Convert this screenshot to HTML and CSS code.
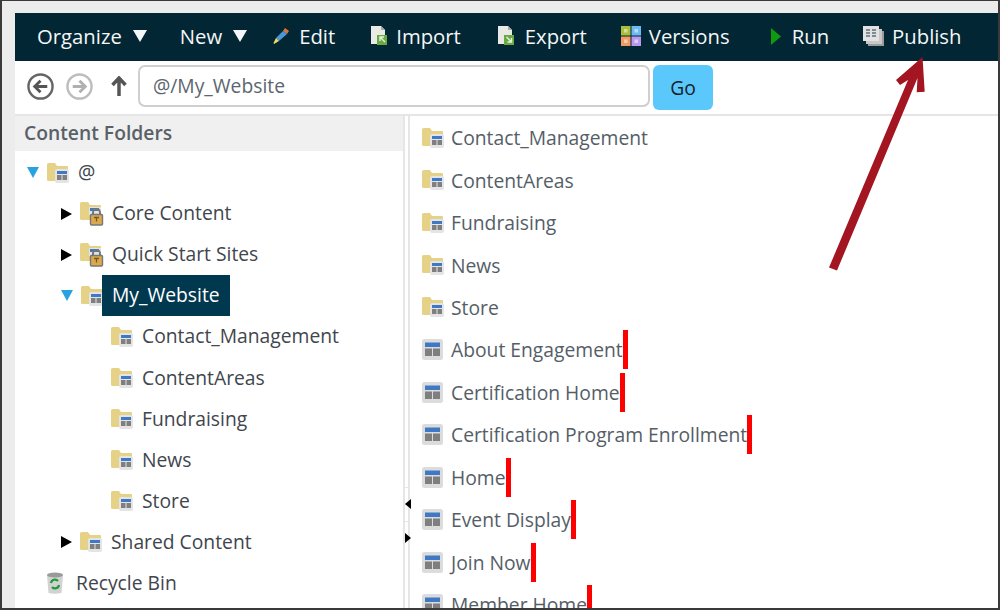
FILE: index.html
```html
<!DOCTYPE html>
<html lang="en">
  <head>
    <meta charset="UTF-8" />
    <title>Content Folders</title>
    <link rel="stylesheet" href="styles.css">
  </head>
  <body>
    <!-- shared icons -->
    <svg class="defs" width="0" height="0">
      <symbol id="page" viewBox="0 0 21 21">
        <rect x="0" y="0" width="21" height="21" rx="2.5" fill="#dcdcdc" />
        <rect x="3" y="3.5" width="15" height="4.5" fill="#3f78c4" />
        <rect x="3" y="9.5" width="7" height="7.5" fill="#7f7f7f" />
        <rect x="11" y="9.5" width="7" height="7.5" fill="#7f7f7f" />
      </symbol>
      <symbol id="folder" viewBox="0 0 22 20">
        <path d="M0 1.5Q0 0 1.5 0H8L10 3H20Q21 3 21 4V18H1.5Q0 18 0 16.5Z" fill="#e6d287" />
        <rect x="8" y="6" width="14" height="14" rx="2" fill="#e4e4e4" />
        <rect x="10" y="8" width="10" height="3" fill="#3f78c4" />
        <rect x="10" y="12" width="4.5" height="5" fill="#7f7f7f" />
        <rect x="15.5" y="12" width="4.5" height="5" fill="#7f7f7f" />
      </symbol>
      <symbol id="locked" viewBox="0 0 24 24">
        <path d="M0 1.5Q0 0 1.5 0H8L10 3H20Q21 3 21 4V18H1.5Q0 18 0 16.5Z" fill="#e6d287" />
        <rect x="9" y="5" width="12" height="8" fill="#e4e4e4" />
        <rect x="10" y="6" width="9" height="3" fill="#3f78c4" />
        <path d="M13 13V10.5a3.5 3.5 0 0 1 7 0V13" fill="none" stroke="#777" stroke-width="2" />
        <rect x="10.5" y="12.5" width="12" height="10.5" rx="1" fill="#dca94a" stroke="#777" stroke-width="1.4" />
        <path d="M14 15.5h5M16.5 15.5v4" stroke="#6e5a2a" stroke-width="1.3" />
      </symbol>
      <symbol id="doc" viewBox="0 0 18 20">
        <path d="M1 0H11L15 4V18H1Z" fill="#e9e9e6" />
        <path d="M11 0L15 4H11Z" fill="#a9a9a9" />
        <rect x="7" y="9" width="10" height="10" fill="#69a944" />
      </symbol>
    </svg>

    <div class="frame">
      <nav class="toolbar">
        <span class="tool organize"><span>Organize</span><i class="caret"></i></span>
        <span class="tool new"><span>New</span><i class="caret"></i></span>
        <span class="tool edit">
          <svg width="18" height="18" viewBox="0 0 18 18">
            <path d="M13 1L17 4L15 7L11 4Z" fill="#d9763a" />
            <path d="M11 4L15 7L7 14L4 11Z" fill="#4b97d8" />
            <path d="M4 11L7 14L2 17L1.5 16Z" fill="#f2dc5c" />
          </svg>
          <span>Edit</span>
        </span>
        <span class="tool import">
          <svg width="18" height="20" viewBox="0 0 18 20">
            <use href="#doc" />
            <path d="M15 16L10 11M10 15V11H14" fill="none" stroke="#e6f2dc" stroke-width="1.4" />
          </svg>
          <span>Import</span>
        </span>
        <span class="tool export">
          <svg width="18" height="20" viewBox="0 0 18 20">
            <use href="#doc" />
            <path d="M9.5 11L14.5 16M14.5 12V16H10.5" fill="none" stroke="#e6f2dc" stroke-width="1.4" />
          </svg>
          <span>Export</span>
        </span>
        <span class="tool versions">
          <svg width="20" height="20" viewBox="0 0 20 20">
            <rect width="9.5" height="9.5" fill="#a8bf3e" />
            <rect x="10.5" width="9.5" height="9.5" fill="#6fb9f2" />
            <rect y="10.5" width="9.5" height="9.5" fill="#f29a62" />
            <rect x="10.5" y="10.5" width="9.5" height="9.5" fill="#b79af0" />
            <rect x="3" y="3" width="3.5" height="3.5" fill="#d4e08e" />
            <rect x="13.5" y="3" width="3.5" height="3.5" fill="#b4dcf8" />
            <rect x="3" y="13.5" width="3.5" height="3.5" fill="#f8cbaa" />
            <rect x="13.5" y="13.5" width="3.5" height="3.5" fill="#dacbf8" />
          </svg>
          <span>Versions</span>
        </span>
        <span class="tool run">
          <svg width="10" height="17" viewBox="0 0 10 17"><path d="M0 0L10 8.5L0 17Z" fill="#0f9a0f" /></svg>
          <span>Run</span>
        </span>
        <span class="tool publish">
          <svg width="21" height="20" viewBox="0 0 21 20">
            <rect x="5" y="5" width="16" height="15" fill="#9c9c9c" />
            <rect x="3" y="3" width="16" height="15" fill="#c8c8c8" />
            <rect x="0" y="0" width="16" height="15" fill="#e2e2e2" />
            <path d="M3 4h4M3 7h4M3 10h4M9 4h4M9 7h4M9 10h4" stroke="#60707c" stroke-width="1.5" />
          </svg>
          <span>Publish</span>
        </span>
      </nav>

      <div class="address">
        <svg class="nav-icon" width="27" height="27" viewBox="0 0 28 28">
          <circle cx="14" cy="14" r="12.5" fill="none" stroke="#666" stroke-width="2.5" />
          <path d="M21 14H9M14 8L8 14L14 20" fill="none" stroke="#555" stroke-width="3" />
        </svg>
        <svg class="nav-icon forward" width="27" height="27" viewBox="0 0 28 28">
          <circle cx="14" cy="14" r="12.5" fill="none" stroke="#bdbdbd" stroke-width="2.5" />
          <path d="M7 14H19M14 8L20 14L14 20" fill="none" stroke="#b0b0b0" stroke-width="3" />
        </svg>
        <svg class="nav-icon up" width="16" height="20" viewBox="0 0 16 20">
          <path d="M8 20V3M1.5 9L8 2L14.5 9" fill="none" stroke="#555" stroke-width="3.5" />
        </svg>
        <div class="path">@/My_Website</div>
        <button class="go">Go</button>
      </div>

      <div class="panes">
        <aside class="left">
          <h2 class="left-title">Content Folders</h2>
          <ul class="tree">
            <li class="node d0"><i class="tw open"></i><svg width="22" height="20"><use href="#folder" /></svg><span class="name">@</span></li>
            <li class="node d1"><i class="tw"></i><svg class="lock" width="24" height="24"><use href="#locked" /></svg><span class="name">Core Content</span></li>
            <li class="node d1"><i class="tw"></i><svg class="lock" width="24" height="24"><use href="#locked" /></svg><span class="name">Quick Start Sites</span></li>
            <li class="node d1"><i class="tw open"></i><svg width="22" height="20"><use href="#folder" /></svg><span class="name selected">My_Website</span></li>
            <li class="node d2"><svg width="22" height="20"><use href="#folder" /></svg><span class="name">Contact_Management</span></li>
            <li class="node d2"><svg width="22" height="20"><use href="#folder" /></svg><span class="name">ContentAreas</span></li>
            <li class="node d2"><svg width="22" height="20"><use href="#folder" /></svg><span class="name">Fundraising</span></li>
            <li class="node d2"><svg width="22" height="20"><use href="#folder" /></svg><span class="name">News</span></li>
            <li class="node d2"><svg width="22" height="20"><use href="#folder" /></svg><span class="name">Store</span></li>
            <li class="node d1"><i class="tw"></i><svg width="22" height="20"><use href="#folder" /></svg><span class="name">Shared Content</span></li>
            <li class="node bin">
              <svg width="18" height="22" viewBox="0 0 18 22">
                <path d="M1 3H17L15.5 21Q9 22.5 2.5 21Z" fill="#d2d2d2" />
                <ellipse cx="9" cy="3" rx="8" ry="2.5" fill="#9a9a9a" />
                <path d="M5 11a4 4 0 0 1 7-2M13 13a4 4 0 0 1-7 2" fill="none" stroke="#1d9a3a" stroke-width="2.2" />
              </svg>
              <span class="name">Recycle Bin</span>
            </li>
          </ul>
        </aside>

        <div class="splitter">
          <div class="split-btn"><i class="arrow-l"></i></div>
          <div class="split-btn"><i class="arrow-r"></i></div>
        </div>

        <ul class="list">
          <li class="item"><svg class="fld" width="22" height="20"><use href="#folder" /></svg><span>Contact_Management</span></li>
          <li class="item"><svg class="fld" width="22" height="20"><use href="#folder" /></svg><span>ContentAreas</span></li>
          <li class="item"><svg class="fld" width="22" height="20"><use href="#folder" /></svg><span>Fundraising</span></li>
          <li class="item"><svg class="fld" width="22" height="20"><use href="#folder" /></svg><span>News</span></li>
          <li class="item"><svg class="fld" width="22" height="20"><use href="#folder" /></svg><span>Store</span></li>
          <li class="item"><svg width="21" height="21"><use href="#page" /></svg><span>About Engagement</span><b class="mark"></b></li>
          <li class="item"><svg width="21" height="21"><use href="#page" /></svg><span>Certification Home</span><b class="mark"></b></li>
          <li class="item"><svg width="21" height="21"><use href="#page" /></svg><span>Certification Program Enrollment</span><b class="mark"></b></li>
          <li class="item"><svg width="21" height="21"><use href="#page" /></svg><span>Home</span><b class="mark"></b></li>
          <li class="item"><svg width="21" height="21"><use href="#page" /></svg><span>Event Display</span><b class="mark"></b></li>
          <li class="item"><svg width="21" height="21"><use href="#page" /></svg><span>Join Now</span><b class="mark"></b></li>
          <li class="item"><svg width="21" height="21"><use href="#page" /></svg><span>Member Home</span><b class="mark"></b></li>
        </ul>
      </div>

      <!-- callout arrow drawn over the page -->
      <svg class="callout" width="1000" height="610" viewBox="0 0 1000 610">
        <path d="M829 267.5L908 80L900 85L896 80L922.5 57L924.7 91.7L916.7 92.3L917.5 78L837 270.5Z" fill="#a31520" />
      </svg>
    </div>
  </body>
</html>
```

FILE: styles.css
```css
* {
  box-sizing: border-box;
}
html,
body {
  margin: 0;
  height: 610px;
  overflow: hidden;
}
body {
  font-family: "Open Sans", sans-serif;
  font-size: 19.3px;
  color: #4f5861;
}
ul {
  list-style: none;
  margin: 0;
  padding: 0;
}
.defs {
  position: absolute;
}
.frame {
  position: relative;
  width: 1000px;
  height: 610px;
  padding: 12px 0 0 13px;
  display: flex;
  flex-flow: column nowrap;
  background-color: #ececec;
  border: 2px solid #3a3a3a;
  border-top-width: 1px;
  overflow: hidden;
}

/* top bar */
.toolbar {
  height: 48px;
  flex: none;
  display: flex;
  align-items: center;
  background-color: #022633;
  color: #f4f6f7;
  font-size: 20.3px;
  padding: 0 0 2px 22px;
}
.tool {
  display: flex;
  align-items: center;
  white-space: nowrap;
}
.tool svg {
  flex: none;
  margin-right: 8px;
}
.caret {
  width: 0;
  height: 0;
  margin-left: 11px;
  border-left: 7px solid transparent;
  border-right: 7px solid transparent;
  border-top: 12px solid #f4f6f7;
}
.new {
  margin-left: 33px;
}
.edit {
  margin-left: 25px;
}
.edit svg {
  margin-right: 9px;
}
.import {
  margin-left: 35px;
}
.export {
  margin-left: 36px;
}
.export svg {
  margin-right: 10px;
}
.versions {
  margin-left: 34px;
}
.run {
  margin-left: 41px;
}
.run svg {
  margin-right: 11px;
}
.publish {
  margin-left: 34px;
}

/* address row */
.address {
  height: 55px;
  flex: none;
  display: flex;
  align-items: center;
  background-color: #fff;
  padding: 0 0 3px 12px;
  border-bottom: 2px solid #e6e6e6;
}
.nav-icon {
  flex: none;
  margin-right: 12px;
}
.nav-icon.forward {
  margin-right: 18px;
}
.nav-icon.up {
  margin-right: 11px;
}
.path {
  width: 512px;
  height: 42px;
  line-height: 38px;
  padding-left: 13px;
  border: 2px solid #cfcfcf;
  border-radius: 7px;
  color: #5b6670;
}
.go {
  width: 60px;
  height: 45px;
  margin: 0 0 -3px 3px;
  border: 0;
  border-radius: 6px;
  background-color: #5bc8fb;
  color: #14212b;
  font-family: inherit;
  font-size: 19.3px;
}

/* panes */
.panes {
  flex: 1;
  min-height: 0;
  display: flex;
  background-color: #fff;
}
.left {
  width: 388px;
  flex: none;
}
.left-title {
  margin: 0;
  height: 35px;
  line-height: 33px;
  padding-left: 9px;
  background-color: #f0f0f0;
  color: #5a6068;
  font-size: 19.3px;
  font-weight: 600;
}
.tree {
  padding-top: 1px;
}
.node {
  height: 41.1px;
  display: flex;
  align-items: center;
  color: #3f464d;
}
.node svg {
  flex: none;
}
.node .lock {
  margin-right: -1px;
}
.name {
  height: 41px;
  line-height: 40px;
  margin-left: -1px;
  padding: 0 10px;
}
.selected {
  background-color: #00394f;
  color: #fff;
}
.d0 {
  padding-left: 12px;
}
.d1 {
  padding-left: 46px;
}
.d2 {
  padding-left: 96px;
}
.bin {
  padding-left: 31px;
}
.bin .name {
  padding-left: 13px;
}
.tw {
  flex: none;
  width: 0;
  height: 0;
  border-left: 11px solid #000;
  border-top: 6.5px solid transparent;
  border-bottom: 6.5px solid transparent;
  margin-right: 8px;
}
.tw.open {
  border-left: 6.5px solid transparent;
  border-right: 6.5px solid transparent;
  border-top: 11px solid #29a3e0;
  border-bottom: 0;
  margin-right: 8px;
}

.splitter {
  width: 7px;
  flex: none;
  padding-top: 371px;
  background-color: #fff;
  border-left: 2px solid #e6e6e6;
  border-right: 2px solid #e6e6e6;
}
.split-btn {
  height: 33.5px;
  display: flex;
  align-items: center;
  border-top: 1px solid #e6e6e6;
}
.arrow-l {
  border-right: 6px solid #000;
  border-top: 5px solid transparent;
  border-bottom: 5px solid transparent;
}
.arrow-r {
  border-left: 6px solid #000;
  border-top: 5px solid transparent;
  border-bottom: 5px solid transparent;
}

.list {
  flex: 1;
  padding: 0.5px 0 0 12px;
}
.item {
  height: 42.45px;
  display: flex;
  align-items: center;
  white-space: nowrap;
  color: #555e67;
}
.item svg {
  flex: none;
  margin-right: 8px;
}
.item .fld {
  margin-right: 7px;
}
.mark {
  flex: none;
  width: 5px;
  height: 39px;
  background-color: #fe0000;
}

.callout {
  position: absolute;
  left: -2px;
  top: -1px;
}
```
